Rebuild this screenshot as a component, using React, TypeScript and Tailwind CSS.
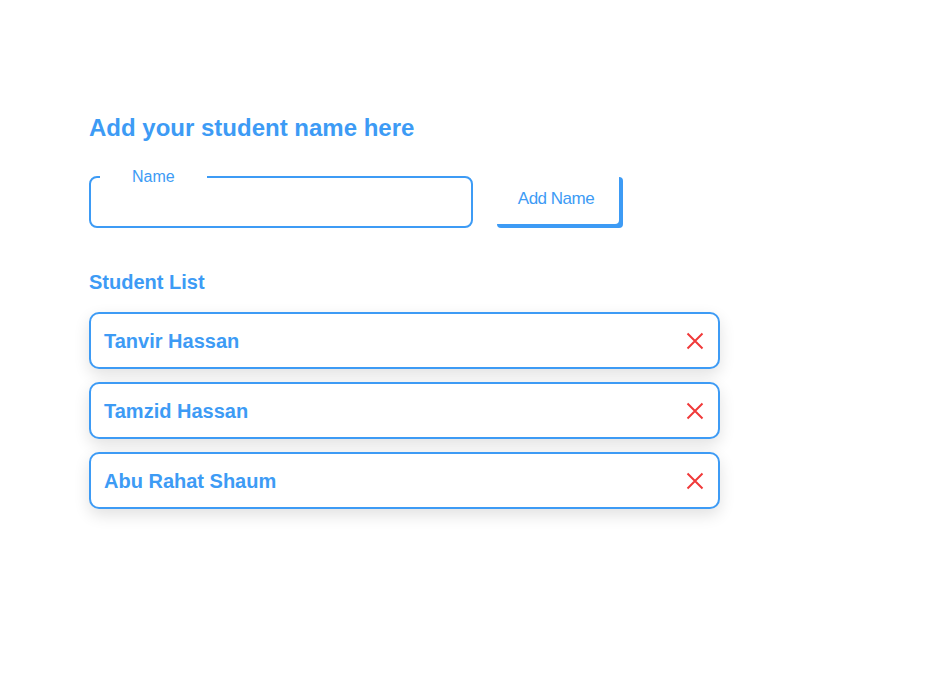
import { useState } from "react";

const App = () => {
  const [name, setName] = useState("");
  const [students, setStudents] = useState<string[]>([
    "Tanvir Hassan",
    "Tamzid Hassan",
    "Abu Rahat Shaum",
  ]);

  const addName = () => {
    if (!name.trim()) return;
    setStudents([...students, name.trim()]);
    setName("");
  };

  return (
    <div
      className="min-h-screen bg-white pl-[89px] pt-[112px]"
      style={{ fontFamily: '"Liberation Sans", Arial, sans-serif' }}
    >
      {/* Form */}
      <h1 className="text-[24px] font-bold text-[#3d9bf5] leading-[32px]">
        Add your student name here
      </h1>

      <div className="flex items-start gap-[20px] mt-[24px]">
        <fieldset className="w-[384px] h-[60px] border-2 border-[#3d9bf5] rounded-[8px] px-[9px]">
          <legend className="px-[32px] text-[16px] text-[#3d9bf5] leading-[18px]">
            Name
          </legend>
          <input
            value={name}
            onChange={(e) => setName(e.target.value)}
            className="w-full h-[30px] outline-none text-base text-[#3d9bf5] bg-transparent"
          />
        </fieldset>

        <button
          onClick={addName}
          className="mt-[5px] w-[126px] h-[51px] rounded-[4px] bg-white text-[#3d9bf5] text-[17px] tracking-[-0.5px] shadow-[4px_4px_0_#3d9bf5] cursor-pointer"
        >
          Add Name
        </button>
      </div>

      {/* List */}
      <h2 className="mt-[41px] text-[20px] font-bold text-[#3d9bf5] leading-[26px]">
        Student List
      </h2>

      <div className="flex flex-col gap-[13px] mt-[17px] w-[631px]">
        {students.map((student, i) => (
          <div
            key={i}
            className="h-[57px] flex items-center justify-between border-2 border-[#3d9bf5] rounded-[10px] pl-[13px] pr-[14px] bg-white shadow-[0_6px_16px_rgba(0,0,0,0.12)]"
          >
            <p className="text-xl font-bold text-[#3d9bf5]">{student}</p>
            <button
              onClick={() => setStudents(students.filter((_, idx) => idx !== i))}
              className="cursor-pointer"
              aria-label="remove"
            >
              <svg width="18" height="18" viewBox="0 0 18 18" fill="none">
                <path
                  d="M1.5 1.5L16.5 16.5M16.5 1.5L1.5 16.5"
                  stroke="#f03a3a"
                  strokeWidth="2"
                />
              </svg>
            </button>
          </div>
        ))}
      </div>
    </div>
  );
};

export default App;
